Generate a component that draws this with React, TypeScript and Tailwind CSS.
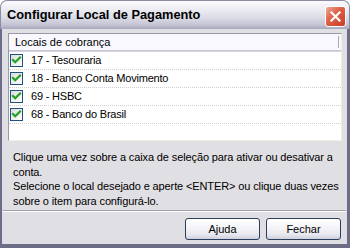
import React from "react";

const font = { fontFamily: '"Liberation Sans", Arial, sans-serif' };

function Check() {
  return (
    <div className="w-[13px] h-[13px] border border-[#1c5180] bg-[linear-gradient(135deg,#dcdcd7,#ffffff)] flex items-center justify-center shrink-0">
      <svg width="11" height="11" viewBox="0 0 11 11">
        <path d="M2 5 L4.2 7.3 L9 2.6" fill="none" stroke="#21a121" strokeWidth="2.2" strokeLinecap="square" />
      </svg>
    </div>
  );
}

const items = ["17 - Tesouraria", "18 - Banco Conta Movimento", "69 - HSBC", "68 - Banco do Brasil"];

function Btn({ label }: { label: string }) {
  return (
    <div className="w-[75px] h-[22px] rounded-[3px] border border-[#2b3f5c] bg-[linear-gradient(180deg,#ffffff_0%,#f4f4f8_45%,#e6e6ee_80%,#d0d0dc_100%)] flex items-center justify-center text-[11px] text-black">
      {label}
    </div>
  );
}

export default function App() {
  return (
    <div className="w-[350px] h-[248px] flex flex-col bg-white" style={font}>
      <div className="h-[29px] rounded-t-[7px] border border-b-0 border-[#8c8ca4] bg-[linear-gradient(180deg,#fbfbfd_0%,#ececf2_30%,#dcdce6_60%,#c4c4d4_85%,#a8a8be_100%)] flex items-center justify-between pl-[6px] pr-[3px]">
        <span className="text-[12.8px] font-bold text-black leading-none mt-[1px]">Configurar Local de Pagamento</span>
        <div className="w-[21px] h-[21px] rounded-[3px] border border-white bg-[linear-gradient(135deg,#f0a898_0%,#e0644c_40%,#c83a22_100%)] flex items-center justify-center mt-[2px]">
          <svg width="13" height="13" viewBox="0 0 13 13">
            <path d="M2.5 2.5 L10.5 10.5 M10.5 2.5 L2.5 10.5" stroke="#ffffff" strokeWidth="2.2" strokeLinecap="square" />
          </svg>
        </div>
      </div>
      <div className="flex-1 flex flex-col border-l-2 border-r-[3px] border-b-4 border-[#6d6d88]">
        <div className="flex-1 flex flex-col border-l border-r border-b border-[#dcdce6] bg-[#e0dfe3]">
          <div className="mt-[4px] ml-[5px] mr-[4px] h-[108px] border-l border-t border-[#9a9aa6] border-r border-b border-r-[#f1efe2] border-b-[#f1efe2] bg-white flex flex-col">
            <div className="h-[18px] flex flex-col">
              <div className="h-[16px] bg-[#f8f8fe] flex items-center pl-[6px] pr-[2px] text-[11px] text-black">
                <span className="flex-1">Locais de cobrança</span>
                <div className="w-[1px] h-[12px] bg-[#a8a8b8]" />
              </div>
              <div className="h-[1px] bg-[#c5c5d6]" />
              <div className="h-[1px] bg-[#d4d4e0]" />
            </div>
            {items.map((t) => (
              <div key={t} className="h-[18px] flex items-center pl-[1px] border-b border-dotted border-[#d0d0d0] text-[11px] text-black">
                <Check />
                <span className="ml-[8px] tracking-[-0.2px]">{t}</span>
              </div>
            ))}
          </div>
          <div className="mt-[9px] h-[58px] pl-[10px] text-[11px] leading-[14.5px] tracking-[-0.12px] text-black whitespace-nowrap">
            <div>Clique uma vez sobre a caixa de seleção para ativar ou desativar a</div>
            <div>conta.</div>
            <div>Selecione o local desejado e aperte &lt;ENTER&gt; ou clique duas vezes</div>
            <div>sobre o item para configurá-lo.</div>
          </div>
          <div className="mt-[2px] h-[1px] bg-[#a0a0a8]" />
          <div className="h-[1px] bg-white" />
          <div className="mt-[6px] flex justify-end gap-[6px] pr-[5px]">
            <Btn label="Ajuda" />
            <Btn label="Fechar" />
          </div>
        </div>
      </div>
    </div>
  );
}
